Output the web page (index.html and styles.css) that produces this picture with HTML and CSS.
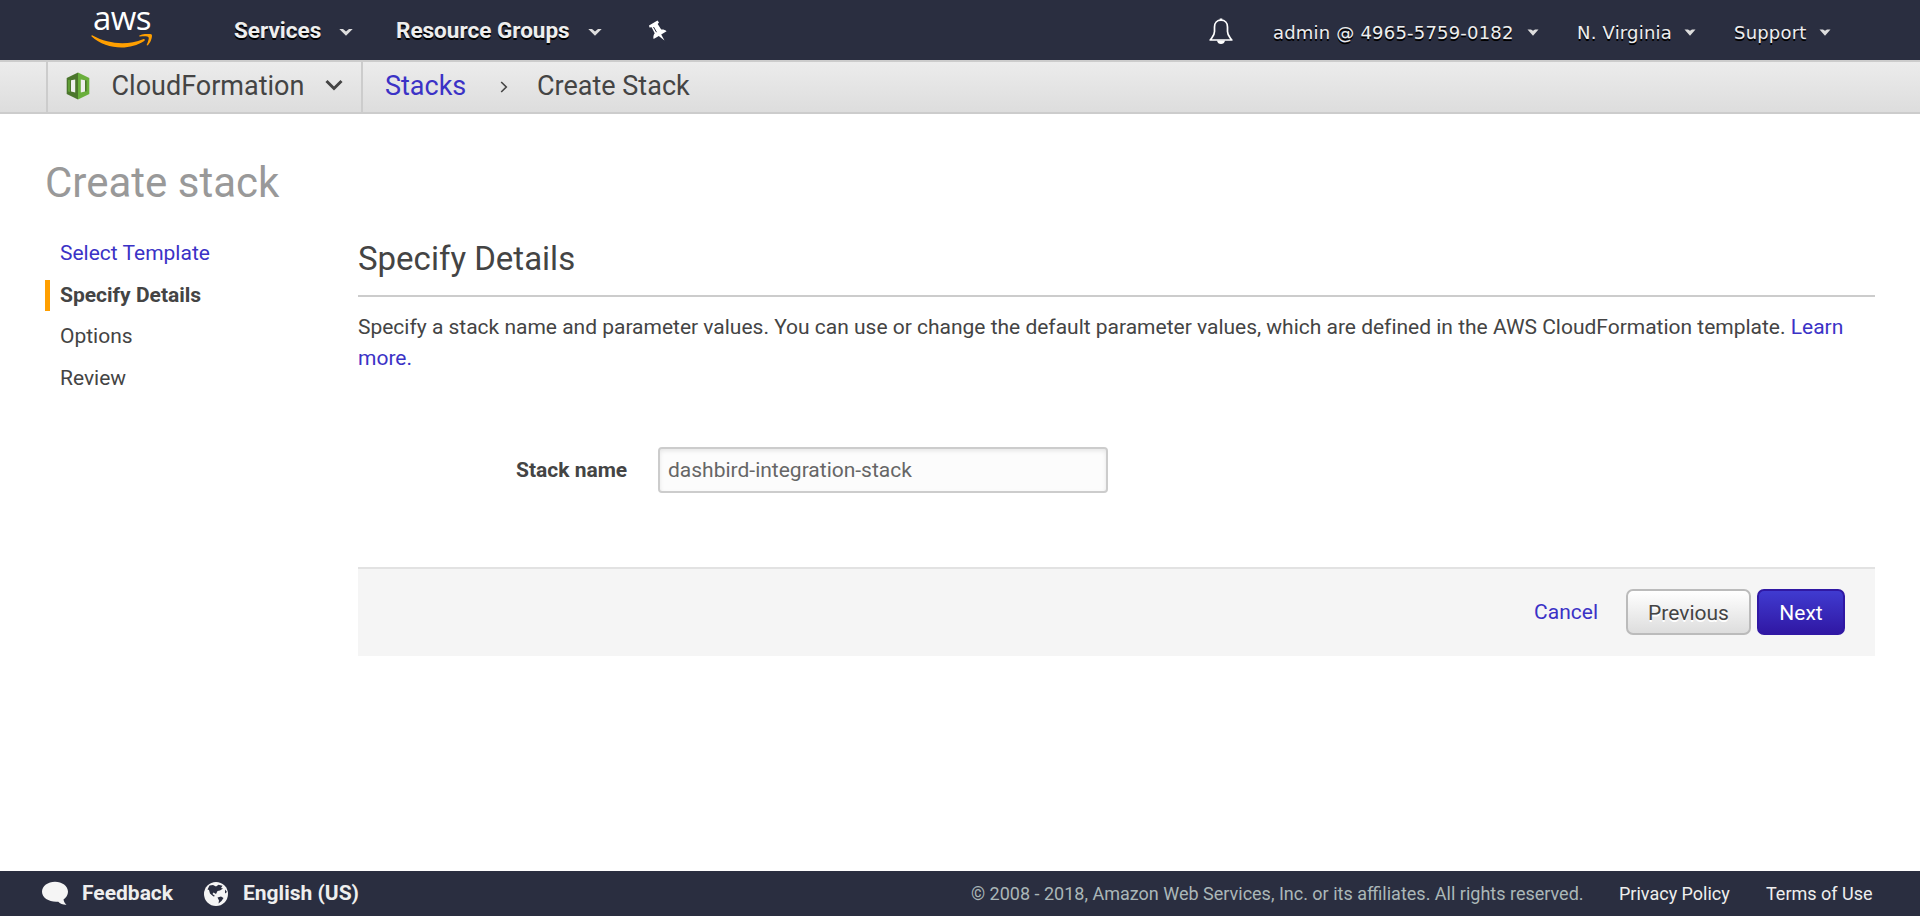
FILE: index.html
```html
<!DOCTYPE html>
<html lang="en">
<head>
<meta charset="utf-8">
<title>Create stack</title>
<link rel="stylesheet" href="styles.css">
</head>
<body>
<header class="topbar">
  <a class="logo">
    <span class="logo-word">aws</span>
    <svg class="smile" width="62" height="15" viewBox="0 0 62 15"><path fill="#ff9f00" d="M.4 2.2C.2 1.5.8 1.1 1.6 1.5 18 10.5 37 11.300 52 5.200 53.500 4.600 54.500 6 53.200 7 38 17 15 15.500.4 2.200Z"/><path fill="#ff9f00" d="M48.500 1.500C52.500-.6 60-.6 60.800.8 61.600 3 59.500 9 56.700 11.200 56 11.700 55.500 11.400 55.800 10.600 57 7.500 58.300 4.200 57.500 3.200 56.500 2 52.500 2.300 49 2.600 48 2.700 47.700 2 48.500 1.500Z"/></svg>
  </a>
  <a class="menu services">Services</a>
  <svg class="chev chev-a" width="14" height="8" viewBox="0 0 14 8"><path fill="#ddd" d="M.3 1H4L7 3.500 10 1H13.700L7 7.800Z"/></svg>
  <a class="menu groups">Resource Groups</a>
  <svg class="chev chev-b" width="14" height="8" viewBox="0 0 14 8"><path fill="#ddd" d="M.3 1H4L7 3.500 10 1H13.700L7 7.800Z"/></svg>
  <svg class="pin" width="20" height="22" viewBox="0 0 20 22"><path fill="#fff" d="M1 5.500 9.500.5 11 2.500 9.700 4 13.200 9.500C15 9.300 17.500 9.700 18.600 11.200L13.200 14.500 16.500 20.500 10.800 16 5.600 19C5 17 5.500 14.700 6.700 13.200L3.600 7.300 1.500 7.400Z"/><path stroke="#2a2e40" stroke-width="1" d="M5.500 7 8.500 12.200"/></svg>
  <svg class="bell" width="24" height="27" viewBox="0 0 24 27"><path fill="none" stroke="#fff" stroke-width="1.700" stroke-linejoin="round" d="M12 2.200C8 2.200 5.500 5 5.500 9V13.500C5.500 17.500 3.200 19 1.200 22H22.800C20.800 19 18.500 17.500 18.500 13.500V9C18.500 5 16 2.200 12 2.200Z"/><path fill="#fff" d="M10.700.5H13.300V3H10.700ZM8 22.500H16C15.500 27.300 8.500 27.300 8 22.500Z"/></svg>
  <a class="account user">admin @ 4965-5759-0182</a>
  <svg class="caret caret-a" width="12" height="7" viewBox="0 0 12 7"><path fill="#ddd" d="M.5.5H4L6 1.800 8 .5H11.500L6 6.800Z"/></svg>
  <a class="account region">N. Virginia</a>
  <svg class="caret caret-b" width="12" height="7" viewBox="0 0 12 7"><path fill="#ddd" d="M.5.5H4L6 1.800 8 .5H11.500L6 6.800Z"/></svg>
  <a class="account support">Support</a>
  <svg class="caret caret-c" width="12" height="7" viewBox="0 0 12 7"><path fill="#ddd" d="M.5.5H4L6 1.800 8 .5H11.500L6 6.800Z"/></svg>
</header>
<nav class="crumbs">
  <div class="service">
    <svg class="cf" width="24" height="28" viewBox="0 0 24 28"><path fill="#4b762c" d="M12 .5.700 6V22L12 27.500Z"/><path fill="#6aaf3c" d="M12 .5 23.300 6V22L12 27.500Z"/><path fill="#eee" d="M5 8.200 9.200 7.500V20.500L5 19.500Z"/><path fill="#eee" d="M19 8.200 14.800 7.500V20.500L19 19.500Z"/><path fill="#6aaf3c" d="M2.300 8 3.700 7.700V20L2.300 19.500Z"/><path fill="#4b762c" d="M19 8.200 20.600 8.600V19.200L19 19.500Z"/></svg>
    <span class="service-name">CloudFormation</span>
    <svg class="open" width="18" height="12" viewBox="0 0 18 12"><path fill="none" stroke="#444" stroke-width="3" d="M1.500 2 9 9.500 16.500 2"/></svg>
  </div>
  <a class="crumb stacks">Stacks</a>
  <svg class="sep" width="8" height="12" viewBox="0 0 8 12"><path fill="none" stroke="#444" stroke-width="1.600" d="M1.200 1 6.300 6 1.200 11"/></svg>
  <span class="crumb current">Create Stack</span>
</nav>
<main class="page">
  <h1 class="title">Create stack</h1>
  <div class="columns">
    <ol class="steps">
      <li class="step link"><span>Select Template</span></li>
      <li class="step active"><span>Specify Details</span></li>
      <li class="step"><span>Options</span></li>
      <li class="step"><span>Review</span></li>
    </ol>
    <section class="details">
      <h2 class="heading">Specify Details</h2>
      <p class="intro">Specify a stack name and parameter values. You can use or change the default parameter values, which are defined in the AWS CloudFormation template. <a class="link">Learn<br>more.</a></p>
      <div class="field">
        <label class="label" for="stack">Stack name</label>
        <input class="input" id="stack" type="text" value="dashbird-integration-stack">
      </div>
      <div class="actions">
        <a class="cancel">Cancel</a>
        <button class="button previous">Previous</button>
        <button class="button next">Next</button>
      </div>
    </section>
  </div>
</main>
<footer class="footer">
  <svg class="bubble" width="27" height="25" viewBox="0 0 27 25"><path fill="#f5f5f5" d="M13 .8C20 .8 26 5 26 10.800 26 14 24 16.700 21.500 18.500 21.800 20.500 23 22.500 24.500 23.700 21.500 24 18 22.500 16.300 20.700 7.500 21.500 0 17 0 10.800 0 5 6 .8 13 .8Z"/></svg>
  <a class="foot feedback">Feedback</a>
  <svg class="globe" width="26" height="26" viewBox="0 0 26 26"><circle cx="13" cy="13" r="12" fill="#f5f5f5"/><path fill="#2a2e40" d="M6.500 4.500 10 4 13 5.500 15.500 3.800 19.500 4.800 18 7 20 7.500 17 9.500 14.500 10 13 13 10.500 11.500 9.500 13 12 15 10.500 15.500 7 12.500 6 9 4.500 8.500ZM14.500 16.500 18 15.500 20.500 17 18.500 20 15.500 22.500 16 19.500ZM22 8.500 24 11 22 12.500Z"/></svg>
  <a class="foot language">English (US)</a>
  <span class="legal copy">© 2008 - 2018, Amazon Web Services, Inc. or its affiliates. All rights reserved.</span>
  <a class="legal privacy">Privacy Policy</a>
  <a class="legal terms">Terms of Use</a>
</footer>
</body>
</html>
```
FILE: styles.css
```css
* { box-sizing: border-box; }
html, body { margin: 0; height: 100%; }
body {
  display: flex;
  flex-direction: column;
  height: 916px;
  overflow: hidden;
  background: #fff;
  color: #444;
  font: 21px/31px Roboto, sans-serif;
  white-space: nowrap;
}
svg { display: block; flex: none; }

.topbar {
  display: flex;
  flex: none;
  align-items: flex-start;
  height: 62px;
  border-bottom: 2px solid #ccc;
  background: #2a2e40;
  color: #eee;
}
.logo { flex: none; width: 62px; margin-left: 91px; }
.logo-word {
  display: block;
  height: 34px;
  color: #fff;
  font: 500 33px/36px "Open Sans", sans-serif;
  text-align: center;
  letter-spacing: -0.5px;
}
.menu {
  flex: none;
  padding-top: 15px;
  font-size: 22.5px;
  line-height: 30px;
  font-weight: 700;
  text-shadow: 0 2px 0 #000;
}
.services { width: 105px; margin-left: 81px; }
.groups { width: 192px; margin-left: 43px; }
.chev { margin-top: 28px; }
.pin { margin: 20px 0 0 46px; }
.bell { margin: 18px 0 0 541px; }
.account {
  flex: none;
  padding-top: 18px;
  font: 18px/30px "DejaVu Sans", sans-serif;
  letter-spacing: 0.2px;
  text-shadow: 0 2px 0 #000;
}
.user { width: 254px; margin-left: 40px; }
.region { width: 107px; margin-left: 38px; }
.support { width: 85px; margin-left: 38px; }
.caret { margin-top: 29px; }

.crumbs {
  display: flex;
  flex: none;
  height: 52px;
  padding-left: 46px;
  border-bottom: 2px solid #ccc;
  background: linear-gradient(#ececec, #ddd);
  font-size: 27px;
  line-height: 48px;
}
.service {
  display: flex;
  width: 317px;
  border: solid #ccc;
  border-width: 0 2px;
}
.cf { margin: 10px 0 0 18px; }
.service-name { width: 213px; margin-left: 21.500px; }
.open { margin-top: 17px; }
.stacks { width: 115px; margin-left: 22px; color: #3b32c6; }
.sep { margin-top: 19px; }
.current { margin-left: 29px; }

.page { flex: 1; padding: 41px 45px 0; }
.title {
  margin: 0;
  color: #999;
  font-size: 42px;
  font-weight: 400;
  line-height: 56px;
}
.columns { display: flex; padding-top: 25px; }
.steps { flex: none; width: 313px; margin: 0; padding: 2px 0 0; list-style: none; }
.step { padding: 0 0 0 15px; margin-bottom: 10.600px; }
.link, .cancel { color: #3b32c6; }
.active {
  padding-left: 10px;
  border-left: 5px solid #ff9f00;
  font-weight: 700;
}
.details { width: 1517px; }
.heading {
  margin: 0;
  height: 61px;
  border-bottom: 2px solid #ccc;
  font-size: 33px;
  font-weight: 400;
  line-height: 45px;
}
.intro { margin: 15px 0 0; letter-spacing: -0.008px; }
.field { display: flex; align-items: center; margin-top: 73px; }
.label { width: 142px; margin-left: 158px; font-weight: 700; }
.input {
  width: 450px;
  height: 46px;
  padding: 0 8px;
  border: 2px solid #ccc;
  border-radius: 4px;
  background: #fcfcfc;
  box-shadow: inset 0 2px 4px rgba(0, 0, 0, .09);
  color: #666;
  font: 21px Roboto, sans-serif;
}
.actions {
  display: flex;
  align-items: center;
  justify-content: flex-end;
  height: 89px;
  margin-top: 74px;
  padding: 0 30px 1px 0;
  border-top: 2px solid #e2e2e2;
  background: #f5f5f5;
}
.cancel { margin-right: 28px; padding-top: 1px; }
.button {
  height: 46px;
  padding: 1px 0 0;
  border-radius: 7px;
  font: 21px Roboto, sans-serif;
}
.previous {
  width: 125px;
  margin-right: 6px;
  border: 2px solid #bbb;
  background: linear-gradient(#fff, #ddd);
  color: #444;
  text-shadow: 0 2px 0 #fff;
}
.next {
  width: 88px;
  border: 2px solid #3018a4;
  background: linear-gradient(#403bd0, #3018a4);
  color: #fff;
}

.footer {
  display: flex;
  flex: none;
  height: 45px;
  background: #2a2e40;
  color: #eee;
  line-height: 44px;
}
.bubble { margin: 10px 0 0 42px; }
.foot { font-weight: 700; }
.feedback { width: 106px; margin-left: 13px; }
.globe { margin: 10px 0 0 15px; }
.language { width: 728px; margin-left: 14px; }
.legal { font-size: 18px; line-height: 46px; }
.copy { width: 648px; color: #aab7b8; }
.privacy { width: 147px; }
```
